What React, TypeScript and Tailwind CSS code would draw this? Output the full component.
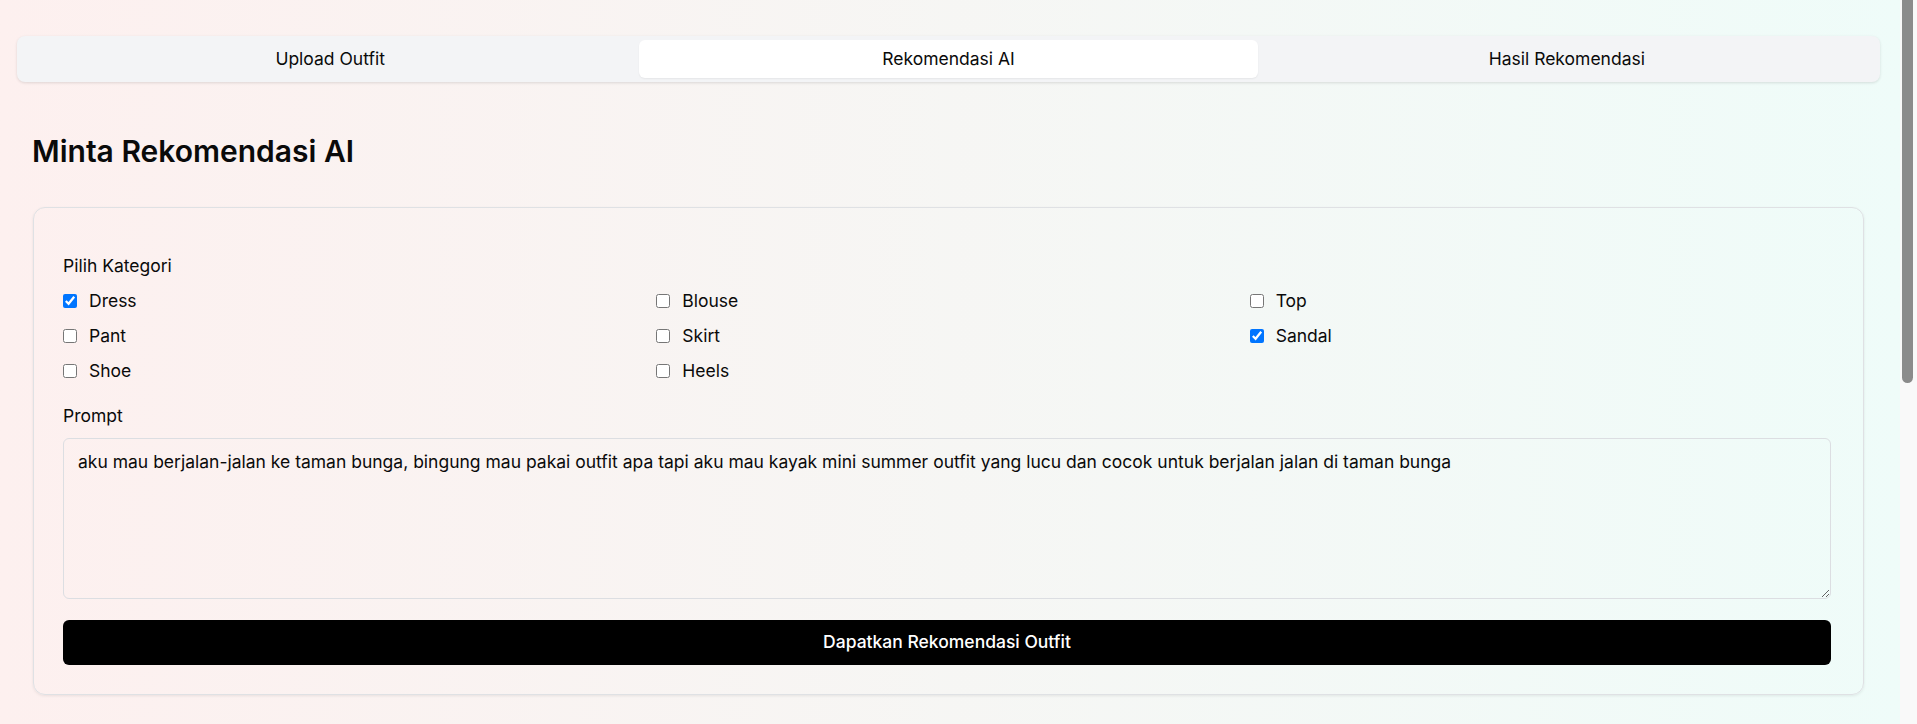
import React from "react";

const cats: { name: string; checked: boolean }[] = [
  { name: "Dress", checked: true },
  { name: "Blouse", checked: false },
  { name: "Top", checked: false },
  { name: "Pant", checked: false },
  { name: "Skirt", checked: false },
  { name: "Sandal", checked: true },
  { name: "Shoe", checked: false },
  { name: "Heels", checked: false },
];

export default function App() {
  return (
    <div className="flex h-[724px] overflow-hidden font-[Inter,sans-serif] text-[#0a0a0a]">
      <div className="min-w-0 flex-1 bg-linear-to-r from-[#fdf0ef] to-[#effcf9]">
        <div className="pl-[17px] pr-[20px] pt-[36px]">
          <div className="grid h-[46px] grid-cols-3 rounded-lg bg-[#f3f4f6] p-1 shadow-[0_1px_3px_rgba(0,0,0,0.12)]">
            <button className="rounded-md text-[17.5px]">Upload Outfit</button>
            <button className="rounded-md bg-white text-[17.5px] shadow-[0_1px_2px_rgba(0,0,0,0.06)]">
              Rekomendasi AI
            </button>
            <button className="rounded-md text-[17.5px]">Hasil Rekomendasi</button>
          </div>
        </div>

        <h1 className="mt-[51px] pl-[32px] text-3xl font-semibold leading-9">Minta Rekomendasi AI</h1>

        <div className="ml-[33px] mr-[36px] mt-[38px] rounded-xl border border-[#dfe1e4] pb-[29px] pl-[29px] pr-[32px] pt-[46px] shadow-[0_1px_3px_rgba(0,0,0,0.08)]">
          <div className="text-[17.5px] leading-6">Pilih Kategori</div>
          <div className="mt-[11px] grid grid-cols-3 gap-x-3 gap-y-[11px]">
            {cats.map((c) => (
              <label key={c.name} className="flex h-6 items-center gap-[12px] text-[17.5px]">
                <input type="checkbox" defaultChecked={c.checked} className="h-[14px] w-[14px]" />
                <span>{c.name}</span>
              </label>
            ))}
          </div>

          <div className="mt-[21px] text-[17.5px] leading-6">Prompt</div>
          <textarea
            className="mt-[10px] block h-[161px] w-full rounded-md border border-[#dcdee2] bg-transparent px-[14px] pt-[11px] text-[17.5px] leading-6 outline-none"
            defaultValue="aku mau berjalan-jalan ke taman bunga, bingung mau pakai outfit apa tapi aku mau kayak mini summer outfit yang lucu dan cocok untuk berjalan jalan di taman bunga"
          />
          <button className="mt-[21px] flex h-[45px] w-full items-center justify-center rounded-md bg-black text-[17.5px] font-medium text-white">
            Dapatkan Rekomendasi Outfit
          </button>
        </div>
      </div>
      <div className="w-[17px] shrink-0 bg-[#f9f9f9] pl-[2px] pr-[4px]">
        <div className="h-[383px] rounded-b-full bg-[#8b8b8b]" />
      </div>
    </div>
  );
}
